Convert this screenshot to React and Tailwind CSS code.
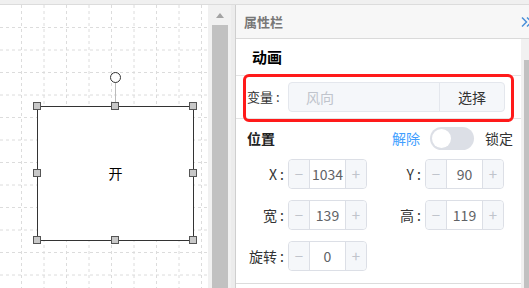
const font = { fontFamily: '"Noto Sans CJK SC", "Liberation Sans", sans-serif' }

const handles = [
  [37, 101], [115, 101], [193, 101],
  [37, 168], [193, 168],
  [37, 235], [115, 235], [193, 235],
]

function Grid() {
  const xs = [], ys = []
  for (let i = 0; i < 10; i++) xs.push(21.5 + i * 22.5)
  for (let i = 0; i < 13; i++) ys.push(22.5 + i * 22.5)
  return (
    <svg className="absolute inset-0" width="208" height="283">
      {xs.map((x) => (
        <line key={'x' + x} x1={x} y1="0" x2={x} y2="283" stroke="#dcdcdc" strokeWidth="1" strokeDasharray="3 3" />
      ))}
      {ys.map((y) => (
        <line key={'y' + y} x1="0" y1={y} x2="208" y2={y} stroke="#dcdcdc" strokeWidth="1" strokeDasharray="3 3" />
      ))}
    </svg>
  )
}

function Canvas() {
  return (
    <div className="relative w-[208px] h-full bg-white overflow-hidden">
      <Grid />
      <div className="absolute left-[37px] top-[101px] w-[157px] h-[135px] border border-[#333] bg-white flex items-center justify-center text-[14px] text-black">
        开
      </div>
      <div className="absolute left-[115px] top-[77px] w-px h-[24px] bg-[#bbb]" />
      <div className="absolute left-[110px] top-[67px] w-[11px] h-[11px] rounded-full border border-[#333] bg-white" />
      {handles.map(([x, y]) => (
        <div key={x + '-' + y} className="absolute w-[8px] h-[8px] bg-[#c8c8c8] border border-[#555]" style={{ left: x - 4, top: y - 4 }} />
      ))}
    </div>
  )
}

function NumberInput({ value }) {
  return (
    <div className="flex h-[30px] w-[79px] rounded-[4px] border border-[#dcdfe6] bg-white text-[#c0c4cc]">
      <div className="w-[21px] flex items-center justify-center bg-[#f5f7fa] border-r border-[#dcdfe6] rounded-l-[4px] text-[15px]">−</div>
      <div className="flex-1 flex items-center justify-center text-[14px] text-[#606266]">{value}</div>
      <div className="w-[21px] flex items-center justify-center bg-[#f5f7fa] border-l border-[#dcdfe6] rounded-r-[4px] text-[15px]">+</div>
    </div>
  )
}

function Field({ label, value, labelWidth }) {
  return (
    <div className="flex items-center">
      <div className={`${labelWidth} text-right pr-[4px] text-[14px] text-[#333]`}>{label}</div>
      <NumberInput value={value} />
    </div>
  )
}

function Panel() {
  return (
    <div className="flex-1 flex flex-col border-l border-[#cfcfcf] bg-white">
      <div className="h-[34px] flex items-center justify-between pl-[8px] bg-[#f7f7f7] border-b border-[#dadada] overflow-hidden">
        <span className="text-[13px] font-bold text-[#777]">属性栏</span>
        <svg width="12" height="12" viewBox="0 0 12 12" className="-mr-[4px]">
          <path d="M1 1.5 L5.5 6 L1 10.5 M6 1.5 L10.5 6 L6 10.5" fill="none" stroke="#4a90d9" strokeWidth="1.5" />
        </svg>
      </div>
      <div className="flex-1 flex">
        <div className="w-[285px] flex flex-col">
          <div className="h-[37px] flex items-center pl-[16px] border-b border-[#e4e4e4]">
            <span className="text-[15px] font-bold text-black">动画</span>
          </div>
          <div className="relative h-[43px] flex items-center pl-[11px] border-b border-[#e4e4e4]">
            <span className="text-[13px] text-[#333] w-[41px]">变量 :</span>
            <div className="flex h-[30px] w-[217px] rounded-[4px] border border-[#e4e7ed] bg-[#f5f7fa]">
              <div className="flex-1 flex items-center pl-[17px] text-[14px] text-[#c0c4cc]">风向</div>
              <div className="w-[65px] flex items-center justify-center border-l border-[#e4e7ed] text-[14px] text-[#333]">选择</div>
            </div>
            <div className="absolute left-[7px] top-[-2px] w-[271px] h-[48px] border-[3px] border-[#ff1a1a] rounded-[6px]" />
          </div>
          <div className="flex flex-col border-b border-[#dcdcdc] h-[165px]">
            <div className="h-[38px] flex items-center pl-[11px] pr-[8px]">
              <span className="text-[14px] font-bold text-[#222]">位置</span>
              <span className="ml-auto text-[14px] text-[#409eff]">解除</span>
              <div className="ml-[10px] w-[44px] h-[23px] rounded-full bg-[#dcdfe6] flex items-center p-[2px]">
                <div className="w-[19px] h-[19px] rounded-full bg-white" />
              </div>
              <span className="ml-[11px] text-[14px] text-[#333]">锁定</span>
            </div>
            <div className="flex flex-col gap-[11px] pl-[11px] pt-[2px]">
              <div className="flex gap-[7px]">
                <Field label="X :" value="1034" labelWidth="w-[41px]" />
                <Field label="Y :" value="90" labelWidth="w-[51px]" />
              </div>
              <div className="flex gap-[7px]">
                <Field label="宽 :" value="139" labelWidth="w-[41px]" />
                <Field label="高 :" value="119" labelWidth="w-[51px]" />
              </div>
              <div className="flex">
                <Field label="旋转 :" value="0" labelWidth="w-[41px]" />
              </div>
            </div>
          </div>
        </div>
        <div className="flex-1 bg-[#f1f1f1] flex flex-col">
          <div className="h-[21px]" />
          <div className="ml-[3px] flex-1 bg-[#c1c1c1]" />
        </div>
      </div>
    </div>
  )
}

export default function App() {
  return (
    <div className="w-[529px] h-[288px] overflow-hidden flex flex-col bg-white" style={font}>
      <div className="h-[5px] bg-[#f0f0f0] border-b border-[#dcdcdc]" />
      <div className="flex-1 flex min-h-0">
        <Canvas />
        <div className="w-[23px] bg-[#f1f1f1] flex flex-col items-center">
          <div className="h-[20px] flex items-center justify-center">
            <div className="w-0 h-0 border-l-[4px] border-r-[4px] border-b-[5px] border-l-transparent border-r-transparent border-b-[#a3a3a3]" />
          </div>
          <div className="w-[16px] flex-1 bg-[#c1c1c1]" />
        </div>
        <div className="w-[4px] bg-[#ececec]" />
        <Panel />
      </div>
    </div>
  )
}
